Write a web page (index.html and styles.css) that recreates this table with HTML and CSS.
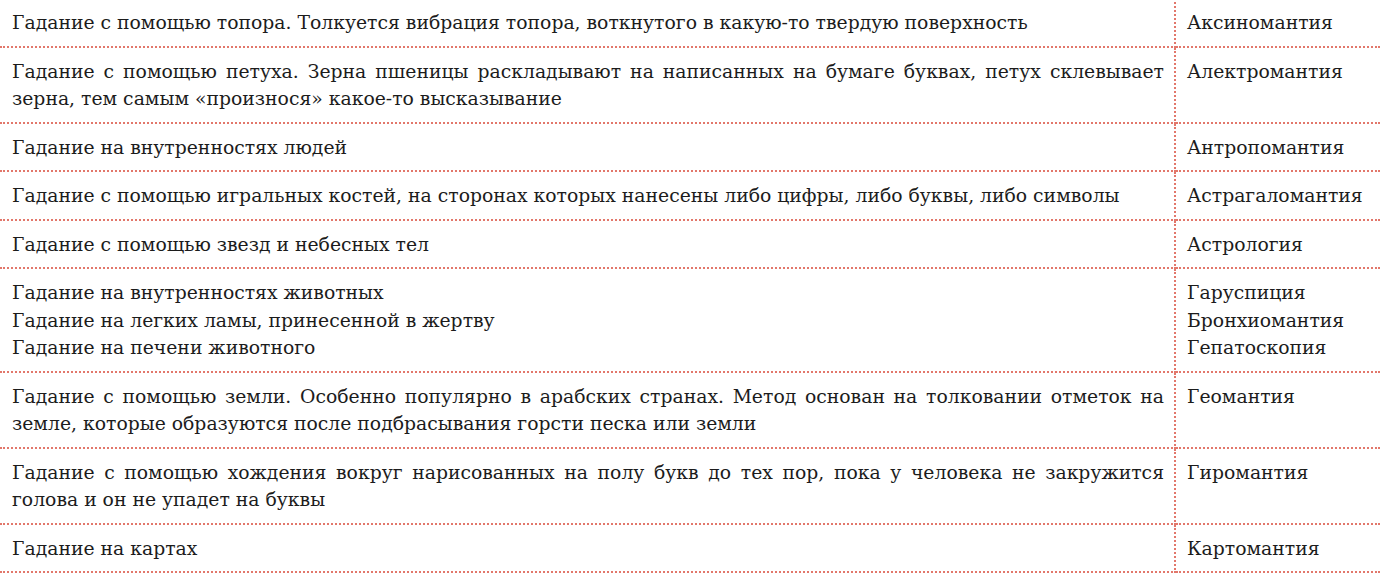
FILE: index.html
```html
<!DOCTYPE html>
<html lang="ru">
<head>
<meta charset="utf-8">
<link rel="stylesheet" href="styles.css">
</head>
<body>
<table class="mantic">
<colgroup><col class="col-desc"><col class="col-name"></colgroup>
<tbody>
<tr><td class="desc">Гадание с помощью топора. Толкуется вибрация топора, воткнутого в какую-то твердую поверхность</td><td class="name">Аксиномантия</td></tr>
<tr><td class="desc">Гадание с помощью петуха. Зерна пшеницы раскладывают на написанных на бумаге буквах, петух склевывает зерна, тем самым «произнося» какое-то высказывание</td><td class="name">Алектромантия</td></tr>
<tr><td class="desc">Гадание на внутренностях людей</td><td class="name">Антропомантия</td></tr>
<tr><td class="desc">Гадание с помощью игральных костей, на сторонах которых нанесены либо цифры, либо буквы, либо символы</td><td class="name">Астрагаломантия</td></tr>
<tr><td class="desc">Гадание с помощью звезд и небесных тел</td><td class="name">Астрология</td></tr>
<tr><td class="desc">Гадание на внутренностях животных<br>Гадание на легких ламы, принесенной в жертву<br>Гадание на печени животного</td><td class="name">Гаруспиция<br>Бронхиомантия<br>Гепатоскопия</td></tr>
<tr><td class="desc">Гадание с помощью земли. Особенно популярно в арабских странах. Метод основан на толковании отметок на земле, которые образуются после подбрасывания горсти песка или земли</td><td class="name">Геомантия</td></tr>
<tr><td class="desc">Гадание с помощью хождения вокруг нарисованных на полу букв до тех пор, пока у человека не закружится голова и он не упадет на буквы</td><td class="name">Гиромантия</td></tr>
<tr><td class="desc">Гадание на картах</td><td class="name">Картомантия</td></tr>
</tbody>
</table>
</body>
</html>
```
FILE: styles.css
```css
html, body {
  margin: 0;
  padding: 0;
  background: #ffffff;
}
body {
  font-family: "DejaVu Serif", "Liberation Serif", serif;
  font-size: 18.8px;
  line-height: 27.5px;
  color: #1c1c1c;
}
.mantic {
  width: 1380px;
  border-collapse: collapse;
  table-layout: fixed;
  margin-top: -3px;
}
.col-desc { width: 1175px; }
.col-name { width: 205px; }
.mantic td {
  vertical-align: top;
  padding: 10px 10px 9px 12px;
  border-top: 2px dotted #e2776b;
  border-bottom: 2px dotted #e2776b;
}
.mantic td.desc {
  text-align: justify;
  border-right: 2px dotted #e2776b;
}
.mantic td.name {
  padding-left: 11px;
  padding-right: 2px;
}
```
